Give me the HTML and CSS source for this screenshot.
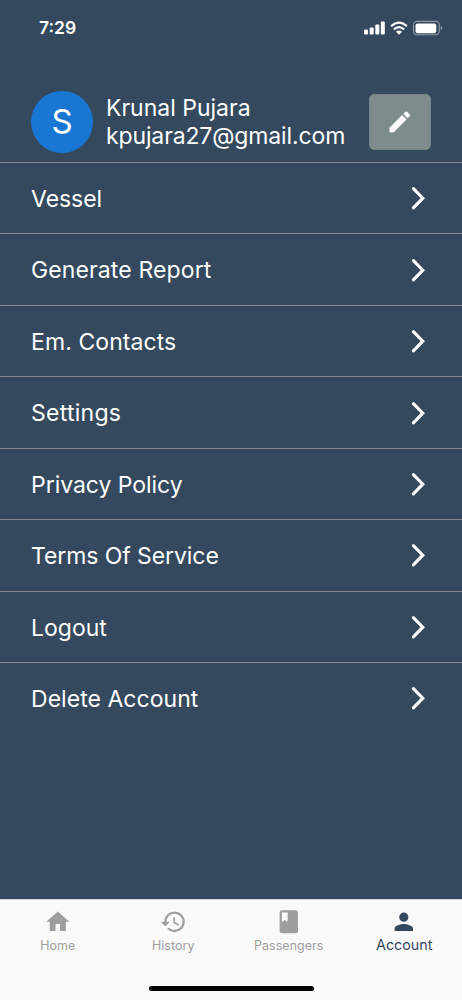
FILE: index.html
```html
<!DOCTYPE html>
<html lang="en">
<head>
<meta charset="utf-8">
<title>Account</title>
<link rel="stylesheet" href="styles.css">
</head>
<body>
<svg width="0" height="0" class="defs"><symbol id="chevron" viewBox="0 0 16 26"><path d="M3.4 3.6 12.8 13.2 3.4 22.8" fill="none" stroke="#fff" stroke-width="3.1" stroke-linecap="round"/></symbol></svg>
<div class="screen">
  <header class="status">
    <span class="time">7:29</span>
    <svg class="signals" width="80" height="16" viewBox="0 0 80 16">
      <g fill="#fff">
        <rect x="0" y="9.5" width="4" height="5" rx="1"/><rect x="5.7" y="7.4" width="4" height="7.1" rx="1"/><rect x="11.3" y="4.4" width="4" height="10.1" rx="1"/><rect x="16.8" y="1.4" width="4" height="13.1" rx="1"/>
        <path d="M35 14.7 38 11.8Q35 9.3 32 11.8Z"/>
        <rect x="51.5" y="3.4" width="20.7" height="9.8" rx="1.8"/>
      </g>
      <g fill="none" stroke="#fff" stroke-width="2.2"><path d="M27.1 6.2Q35-1 42.9 6.2"/><path d="M29.9 9.4Q35 4.8 40.1 9.4"/></g>
      <rect x="49.5" y="1.4" width="25.8" height="13.4" rx="3.6" fill="none" stroke="#8c98a5" stroke-width="1.1"/>
      <path d="M76.7 5.8Q79.9 7.9 76.7 10.2Z" fill="#8c98a5"/>
    </svg>
  </header>
  <section class="profile">
    <div class="avatar">S</div>
    <div class="who"><div class="name">Krunal Pujara</div><div class="mail">kpujara27@gmail.com</div></div>
    <button class="edit" aria-label="Edit"><svg width="27.6" height="27.6" viewBox="0 0 24 24"><path fill="#fff" d="M3 17.25V21h3.75L17.81 9.94l-3.75-3.75L3 17.25zM20.71 7.04a1 1 0 0 0 0-1.41l-2.34-2.34a1 1 0 0 0-1.41 0l-1.83 1.83 3.75 3.75 1.83-1.83z"/></svg></button>
  </section>
  <nav class="menu">
    <a class="row vessel"><span>Vessel</span><svg class="chev"><use href="#chevron"/></svg></a>
    <a class="row report"><span>Generate Report</span><svg class="chev"><use href="#chevron"/></svg></a>
    <a class="row contacts"><span>Em. Contacts</span><svg class="chev"><use href="#chevron"/></svg></a>
    <a class="row settings"><span>Settings</span><svg class="chev"><use href="#chevron"/></svg></a>
    <a class="row privacy"><span>Privacy Policy</span><svg class="chev"><use href="#chevron"/></svg></a>
    <a class="row terms"><span>Terms Of Service</span><svg class="chev"><use href="#chevron"/></svg></a>
    <a class="row logout"><span>Logout</span><svg class="chev"><use href="#chevron"/></svg></a>
    <a class="row delete"><span>Delete Account</span><svg class="chev"><use href="#chevron"/></svg></a>
  </nav>
  <footer class="bottom">
    <div class="tabs">
      <a class="tab"><svg class="icon" viewBox="0 0 24 24"><path d="M10 20v-6h4v6h5v-8h3L12 3 2 12h3v8z"/></svg><span>Home</span></a>
      <a class="tab"><svg class="icon" viewBox="-.5 0 24 24"><path d="M13 3a9 9 0 0 0-9 9H1l3.89 3.89.07.14L9 12H6a7 7 0 1 1 7 7c-1.93 0-3.68-.79-4.94-2.06l-1.42 1.42A8.95 8.95 0 0 0 13 21a9 9 0 0 0 0-18zm-1 5v5l4.28 2.54.72-1.21-3.5-2.08V8H12z"/></svg><span>History</span></a>
      <a class="tab"><svg class="icon" viewBox="0 0 24 24"><path d="M18 2H6a2 2 0 0 0-2 2v16a2 2 0 0 0 2 2h12a2 2 0 0 0 2-2V4a2 2 0 0 0-2-2zM6 4h5v8l-2.5-1.5L6 12V4z"/></svg><span>Passengers</span></a>
      <a class="tab active"><svg class="icon" viewBox="0 0 24 24"><path d="M12 12a4 4 0 1 0 0-8 4 4 0 0 0 0 8zm0 2c-2.67 0-8 1.34-8 4v2h16v-2c0-2.66-5.33-4-8-4z"/></svg><span>Account</span></a>
    </div>
    <div class="indicator"></div>
  </footer>
</div>
</body>
</html>
```
FILE: styles.css
```css
* { box-sizing: border-box; }
body { margin: 0; font-family: Inter, "Liberation Sans", sans-serif; }
.defs { position: absolute; }
.screen { width: 462px; height: 1000px; display: flex; flex-direction: column; background: #34495e; color: #fff; overflow: hidden; }
.status { height: 82px; padding: 17px 18px 0 39px; display: flex; justify-content: space-between; align-items: flex-start; }
.time { font-size: 17.5px; font-weight: 600; line-height: 22px; }
.signals { margin-top: 3px; }
.profile { height: 80px; padding: 0 31px; display: flex; align-items: center; }
.avatar { width: 62px; height: 62px; border-radius: 50%; background: #1976d2; font-size: 33px; line-height: 61px; text-align: center; }
.who { margin-left: 13px; font-size: 23px; line-height: 28px; white-space: nowrap; }
.mail { letter-spacing: -.13px; }
.edit { margin-left: auto; width: 62px; height: 56px; padding: 0; border: 1px solid #75858a; border-radius: 5px; background: #7f8c8d; display: flex; align-items: center; justify-content: center; }
.row { height: 71.45px; padding: 0 36px 0 31px; background: linear-gradient(#848a90, #848a90) 0 0 / 100% 1.4px no-repeat; display: flex; align-items: center; justify-content: space-between; font-size: 23px; line-height: 28px; }
.row span { padding-top: 2.4px; }
.vessel { letter-spacing: -.05px; }
.report { letter-spacing: .12px; }
.contacts { letter-spacing: .08px; }
.settings { letter-spacing: .27px; }
.privacy { letter-spacing: -.04px; }
.terms { letter-spacing: -.08px; }
.logout { letter-spacing: 0; }
.delete { letter-spacing: .04px; }
.chev { width: 16px; height: 26px; margin-top: 1px; }
.bottom { margin-top: auto; height: 101px; background: #fafafa; border-top: 1px solid #d4d7da; display: flex; flex-direction: column; align-items: center; }
.tabs { width: 100%; height: 85.5px; padding-top: 8px; display: grid; grid-template-columns: repeat(4, 1fr); }
.tab { display: flex; flex-direction: column; align-items: center; color: #9e9e9e; font-size: 12.4px; line-height: 20px; letter-spacing: .1px; }
.icon { width: 27.6px; height: 27.6px; fill: currentColor; }
.tab.active { color: #34495e; font-size: 14.3px; line-height: 18px; letter-spacing: 0; }
.indicator { width: 165px; height: 5px; border-radius: 3px; background: #000; }
```
